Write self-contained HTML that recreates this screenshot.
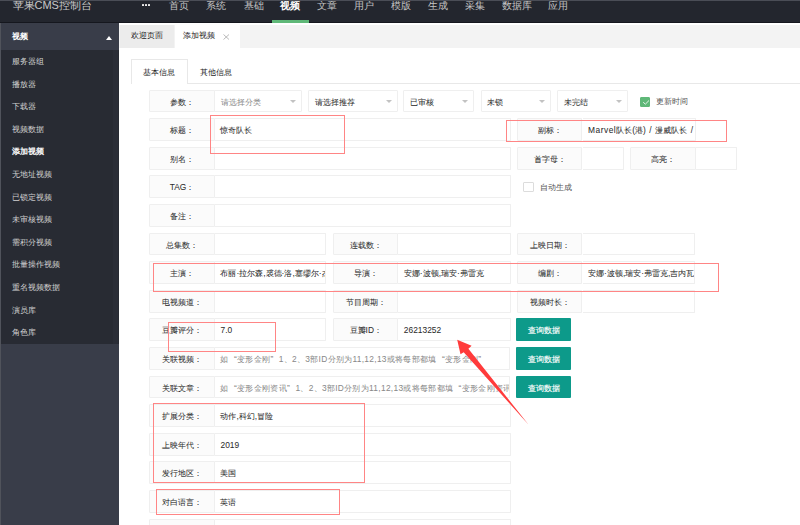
<!DOCTYPE html>
<html><head><meta charset="utf-8"><style>
*{margin:0;padding:0;box-sizing:border-box}
html,body{width:800px;height:525px;overflow:hidden;background:#fff;font-family:"Liberation Sans",sans-serif;}
#hdr{position:absolute;left:0;top:0;width:800px;height:22.8px;background:#23262e}
.logo{position:absolute;left:12.5px;top:-2px;font-size:11px;line-height:14px;color:#c9c9c9;white-space:nowrap}
.dots{position:absolute;left:142px;top:4px;width:8px;height:3px}
.dots b{position:absolute;top:-0.3px;width:2.2px;height:2.6px;background:#eee;border-radius:0.5px}
.nv{position:absolute;top:-1px;font-size:9.6px;line-height:14px;color:#c4c4c4;white-space:nowrap}
.nv.act{color:#fff;font-weight:bold}
#htop{position:absolute;left:0;top:0;width:800px;height:1px;background:#4a4d56}
#hbot{position:absolute;left:0;top:21.7px;width:800px;height:1px;background:#15171e}
#grn{position:absolute;left:272px;top:20px;width:36.5px;height:3px;background:#5fb878}
#side{position:absolute;left:0;top:22.8px;width:119px;height:502.2px;background:#393d49}
#side .grp{position:absolute;left:0;top:0;width:119px;height:27.2px;background:#393d49}
#side .grp span{position:absolute;left:12.4px;top:8px;font-size:8.4px;line-height:10px;color:#fff;font-weight:bold}
#side .tri{position:absolute;left:106.2px;top:13px;width:0;height:0;border-left:3.7px solid transparent;border-right:3.7px solid transparent;border-bottom:4px solid #fff}
#menu{position:absolute;left:0;top:50px;width:119px;height:293.8px;background:#282b33}
.si{position:absolute;left:12px;font-size:8.4px;line-height:22.6px;height:22.6px;color:#d2d2d2;white-space:nowrap}
.si.act{color:#fff;-webkit-text-stroke:0.3px #fff}
#sedge{position:absolute;left:0;top:22.8px;width:1px;height:502.2px;background:#50535b}
#tabs{position:absolute;left:119px;top:22.8px;width:681px;height:25px;background:#f3f3f3;border-top:2.2px solid #fff}
.tab{position:absolute;top:0;height:22.8px;font-size:8.3px;line-height:21.2px;color:#222;white-space:nowrap}
.tab1{left:1.2px;width:54.3px;background:#ececec;padding-left:10.5px}
.tab2{left:55.5px;width:65px;background:#fff;padding-left:8.5px}
.tab2 .x{position:absolute;left:48.5px;top:9.2px;width:6.5px;height:6px}
#ctabs{position:absolute;left:119px;top:47.8px;width:681px;height:36px}
.ct1{position:absolute;left:12px;top:11.4px;width:57px;height:24.6px;border:1px solid #e8e8e8;border-bottom:none;background:#fff;font-size:8.4px;line-height:24.6px;text-align:center;color:#222;padding-right:1.5px}
.ct2{position:absolute;left:69px;top:12.4px;width:57px;height:23px;font-size:8.4px;line-height:24.6px;text-align:center;color:#222;padding-right:1px}
#tline{position:absolute;left:188px;top:83px;width:612px;height:1px;background:#e8e8e8}
#form div{position:absolute}
.lb{border-radius:1px 0 0 1px;background:#fbfbfb;border:1px solid #efefef;font-size:8.4px;line-height:22.2px;text-align:center;color:#2b2b2b;white-space:nowrap;-webkit-text-stroke:0.04px #333}
.in{border-radius:0 1px 1px 0;background:#fff;border:1px solid #efefef;border-left:none;font-size:8.4px;line-height:22.2px;color:#2b2b2b;white-space:nowrap;overflow:hidden;padding-left:5.6px;-webkit-text-stroke:0.04px #333}
.in.ph{letter-spacing:0.3px;color:#888;-webkit-text-stroke:0.02px #888}
.sel{border-radius:1px;background:#fff;border:1px solid #efefef;font-size:8.4px;line-height:22.2px;color:#2b2b2b;white-space:nowrap;overflow:hidden;padding-left:5.6px;-webkit-text-stroke:0.04px #333}
.sel.ph{color:#888;-webkit-text-stroke:0.02px #888}
.sel i{position:absolute;right:5px;top:9.3px;width:0;height:0;border-left:3px solid transparent;border-right:3px solid transparent;border-top:3px solid #c2c2c2}
q1,q2{display:inline-block;width:8.4px;quotes:none}
q1{text-align:right}
q2{text-align:left}
.btn{background:#0d9a8a;color:#fff;font-size:8.4px;line-height:24px;-webkit-text-stroke:0.15px #fff;text-align:center;border-radius:1px;white-space:nowrap}
.red{position:absolute;border:1.6px solid #ff8585}
.cbx{position:absolute;width:10.5px;height:10.5px;border:1px solid #dcdcdc;background:#fff;border-radius:1px}
.cbx.on{background:#5fb878;border-color:#5fb878}
.cbx svg{position:absolute;left:-1px;top:-1px}
.cbt{position:absolute;font-size:8.4px;line-height:12px;color:#555;white-space:nowrap}
</style></head><body>
<div id="hdr">
<div class="logo">苹果CMS控制台</div>
<div class="dots"><b style="left:0"></b><b style="left:3px"></b><b style="left:6px"></b></div>
<div class="nv" style="left:169.2px">首页</div><div class="nv" style="left:206px">系统</div><div class="nv" style="left:244px">基础</div><div class="nv act" style="left:280px">视频</div><div class="nv" style="left:317.25px">文章</div><div class="nv" style="left:354.4px">用户</div><div class="nv" style="left:391.3px">模版</div><div class="nv" style="left:428.2px">生成</div><div class="nv" style="left:464.6px">采集</div><div class="nv" style="left:501.5px">数据库</div><div class="nv" style="left:547.8px">应用</div>
<div id="htop"></div><div id="hbot"></div><div id="grn"></div>
</div>
<div id="side">
<div class="grp"><span>视频</span><div class="tri"></div></div>
</div>
<div id="menu"><div class="si" style="top:0.00px">服务器组</div><div class="si" style="top:22.60px">播放器</div><div class="si" style="top:45.20px">下载器</div><div class="si" style="top:67.80px">视频数据</div><div class="si act" style="top:90.40px">添加视频</div><div class="si" style="top:113.00px">无地址视频</div><div class="si" style="top:135.60px">已锁定视频</div><div class="si" style="top:158.20px">未审核视频</div><div class="si" style="top:180.80px">需积分视频</div><div class="si" style="top:203.40px">批量操作视频</div><div class="si" style="top:226.00px">重名视频数据</div><div class="si" style="top:248.60px">演员库</div><div class="si" style="top:271.20px">角色库</div><div style="position:absolute;left:113.3px;top:0;width:5px;height:293.8px;background:#2b2e37"></div></div>
<div id="sedge"></div>
<div id="tabs"><div class="tab tab1">欢迎页面</div><div class="tab tab2">添加视频<svg class="x" viewBox="0 0 6.5 6"><path d="M0.5 0.5 L6 5.5 M6 0.5 L0.5 5.5" stroke="#aaa" stroke-width="0.8"/></svg></div></div>
<div id="ctabs"><div class="ct1">基本信息</div><div class="ct2">其他信息</div></div>
<div id="tline"></div>
<div id="form">
<div class="lb" style="left:149.10px;top:89.70px;width:65.80px;height:22.80px;">参数：</div>
<div class="sel ph" style="left:214.40px;top:89.70px;width:88.10px;height:22.80px;"><span>请选择分类</span><i></i></div>
<div class="sel" style="left:308.25px;top:89.70px;width:89.25px;height:22.80px;"><span>请选择推荐</span><i></i></div>
<div class="sel" style="left:403.25px;top:89.70px;width:71.00px;height:22.80px;"><span>已审核</span><i></i></div>
<div class="sel" style="left:480.50px;top:89.70px;width:70.25px;height:22.80px;"><span>未锁</span><i></i></div>
<div class="sel" style="left:557.00px;top:89.70px;width:70.50px;height:22.80px;"><span>未完结</span><i></i></div>
<div class="lb" style="left:149.10px;top:118.29px;width:65.80px;height:22.80px;">标题：</div>
<div class="in" style="left:214.90px;top:118.29px;width:296.30px;height:22.80px;"><span>惊奇队长</span></div>
<div class="lb" style="left:517.10px;top:118.29px;width:65.40px;height:22.80px;">副标：</div>
<div class="in" style="left:582.50px;top:118.29px;width:113.00px;height:22.80px;"><span><span style="letter-spacing:0.5px">Marvel</span>队长(港)<span style="word-spacing:1.2px"> / </span>漫威队长<span style="word-spacing:1.2px"> /</span></span></div>
<div class="lb" style="left:149.10px;top:146.88px;width:65.80px;height:22.80px;">别名：</div>
<div class="in" style="left:214.90px;top:146.88px;width:296.30px;height:22.80px;"></div>
<div class="lb" style="left:517.10px;top:146.88px;width:65.40px;height:22.80px;">首字母：</div>
<div class="in" style="left:582.50px;top:146.88px;width:41.25px;height:22.80px;"></div>
<div class="lb" style="left:630.00px;top:146.88px;width:65.50px;height:22.80px;">高亮：</div>
<div class="in" style="left:695.50px;top:146.88px;width:41.25px;height:22.80px;"></div>
<div class="lb" style="left:149.10px;top:175.47px;width:65.80px;height:22.80px;">TAG：</div>
<div class="in" style="left:214.90px;top:175.47px;width:296.30px;height:22.80px;"></div>
<div class="lb" style="left:149.10px;top:204.06px;width:65.80px;height:22.80px;">备注：</div>
<div class="in" style="left:214.90px;top:204.06px;width:296.30px;height:22.80px;"></div>
<div class="lb" style="left:149.10px;top:232.65px;width:65.80px;height:22.80px;">总集数：</div>
<div class="in" style="left:214.90px;top:232.65px;width:111.35px;height:22.80px;"></div>
<div class="lb" style="left:333.25px;top:232.65px;width:65.00px;height:22.80px;">连载数：</div>
<div class="in" style="left:398.25px;top:232.65px;width:112.25px;height:22.80px;"></div>
<div class="lb" style="left:517.10px;top:232.65px;width:65.40px;height:22.80px;">上映日期：</div>
<div class="in" style="left:582.50px;top:232.65px;width:112.00px;height:22.80px;"></div>
<div class="lb" style="left:149.10px;top:261.24px;width:65.80px;height:22.80px;">主演：</div>
<div class="in" style="left:214.90px;top:261.24px;width:111.35px;height:22.80px;"><span>布丽·拉尔森,裘德·洛,塞缪尔·杰克逊</span></div>
<div class="lb" style="left:333.25px;top:261.24px;width:65.00px;height:22.80px;">导演：</div>
<div class="in" style="left:398.25px;top:261.24px;width:112.25px;height:22.80px;"><span>安娜·波顿,瑞安·弗雷克</span></div>
<div class="lb" style="left:517.10px;top:261.24px;width:65.40px;height:22.80px;">编剧：</div>
<div class="in" style="left:582.50px;top:261.24px;width:112.00px;height:22.80px;"><span>安娜·波顿,瑞安·弗雷克,吉内瓦·德沃雷特</span></div>
<div class="lb" style="left:149.10px;top:289.83px;width:65.80px;height:22.80px;">电视频道：</div>
<div class="in" style="left:214.90px;top:289.83px;width:111.35px;height:22.80px;"></div>
<div class="lb" style="left:333.25px;top:289.83px;width:65.00px;height:22.80px;">节目周期：</div>
<div class="in" style="left:398.25px;top:289.83px;width:112.25px;height:22.80px;"></div>
<div class="lb" style="left:517.10px;top:289.83px;width:65.40px;height:22.80px;">视频时长：</div>
<div class="in" style="left:582.50px;top:289.83px;width:112.00px;height:22.80px;"></div>
<div class="lb" style="left:149.10px;top:318.42px;width:65.80px;height:22.80px;">豆瓣评分：</div>
<div class="in" style="left:214.90px;top:318.42px;width:111.35px;height:22.80px;"><span>7.0</span></div>
<div class="lb" style="left:333.25px;top:318.42px;width:65.00px;height:22.80px;">豆瓣ID：</div>
<div class="in" style="left:398.25px;top:318.42px;width:112.25px;height:22.80px;"><span>26213252</span></div>
<div class="btn" style="left:516.10px;top:318.42px;width:54.90px;height:22.80px;">查询数据</div>
<div class="lb" style="left:149.10px;top:347.01px;width:65.80px;height:22.80px;">关联视频：</div>
<div class="in ph" style="left:214.90px;top:347.01px;width:295.60px;height:22.80px;"><span>如<q1>“</q1>变形金刚<q2>”</q2>1、2、3部ID分别为11,12,13或将每部都填<q1>“</q1>变形金刚<q2>”</q2></span></div>
<div class="btn" style="left:516.10px;top:347.01px;width:54.90px;height:22.80px;">查询数据</div>
<div class="lb" style="left:149.10px;top:375.60px;width:65.80px;height:22.80px;">关联文章：</div>
<div class="in ph" style="left:214.90px;top:375.60px;width:295.60px;height:22.80px;"><span>如<q1>“</q1>变形金刚资讯<q2>”</q2>1、2、3部ID分别为11,12,13或将每部都填<q1>“</q1>变形金刚资讯<q2>”</q2></span></div>
<div class="btn" style="left:516.10px;top:375.60px;width:54.90px;height:22.80px;">查询数据</div>
<div class="lb" style="left:149.10px;top:404.19px;width:65.80px;height:22.80px;">扩展分类：</div>
<div class="in" style="left:214.90px;top:404.19px;width:296.30px;height:22.80px;"><span>动作,科幻,冒险</span></div>
<div class="lb" style="left:149.10px;top:432.78px;width:65.80px;height:22.80px;">上映年代：</div>
<div class="in" style="left:214.90px;top:432.78px;width:296.30px;height:22.80px;"><span>2019</span></div>
<div class="lb" style="left:149.10px;top:461.37px;width:65.80px;height:22.80px;">发行地区：</div>
<div class="in" style="left:214.90px;top:461.37px;width:296.30px;height:22.80px;"><span>美国</span></div>
<div class="lb" style="left:149.10px;top:489.96px;width:65.80px;height:22.80px;">对白语言：</div>
<div class="in" style="left:214.90px;top:489.96px;width:296.30px;height:22.80px;"><span>英语</span></div>
<div class="lb" style="left:149.10px;top:518.55px;width:65.80px;height:22.80px;"></div>
<div class="in" style="left:214.90px;top:518.55px;width:296.30px;height:22.80px;"></div>
</div>
<div class="cbx on" style="left:639.5px;top:96.75px;"><svg width="10.5" height="10" viewBox="0 0 10.5 10"><path d="M3.2 5.3 L5.4 7.1 L9 3.5" stroke="#e8f5ec" stroke-width="1" fill="none"/></svg></div>
<div class="cbt" style="left:656.25px;top:95px;">更新时间</div>
<div class="cbx" style="left:523px;top:181.6px;"></div>
<div class="cbt" style="left:540px;top:181px;">自动生成</div>
<div class="red" style="left:209.80px;top:114.60px;width:135.00px;height:39.60px;"></div>
<div class="red" style="left:506.20px;top:119.90px;width:220.80px;height:22.20px;"></div>
<div class="red" style="left:153.20px;top:262.80px;width:566.30px;height:29.30px;"></div>
<div class="red" style="left:168.20px;top:322.20px;width:107.40px;height:29.90px;"></div>
<div class="red" style="left:153.20px;top:402.80px;width:211.90px;height:80.30px;"></div>
<div class="red" style="left:155.90px;top:489.00px;width:184.10px;height:25.60px;"></div>
<svg id="arrow" width="800" height="525" style="position:absolute;left:0;top:0"><polygon points="457.2,339.7 471.6,345.8 468.4,348.7 528.6,424.8 463.7,352.2 460.5,354.3" fill="#ff3b3b"/></svg>
</body></html>
